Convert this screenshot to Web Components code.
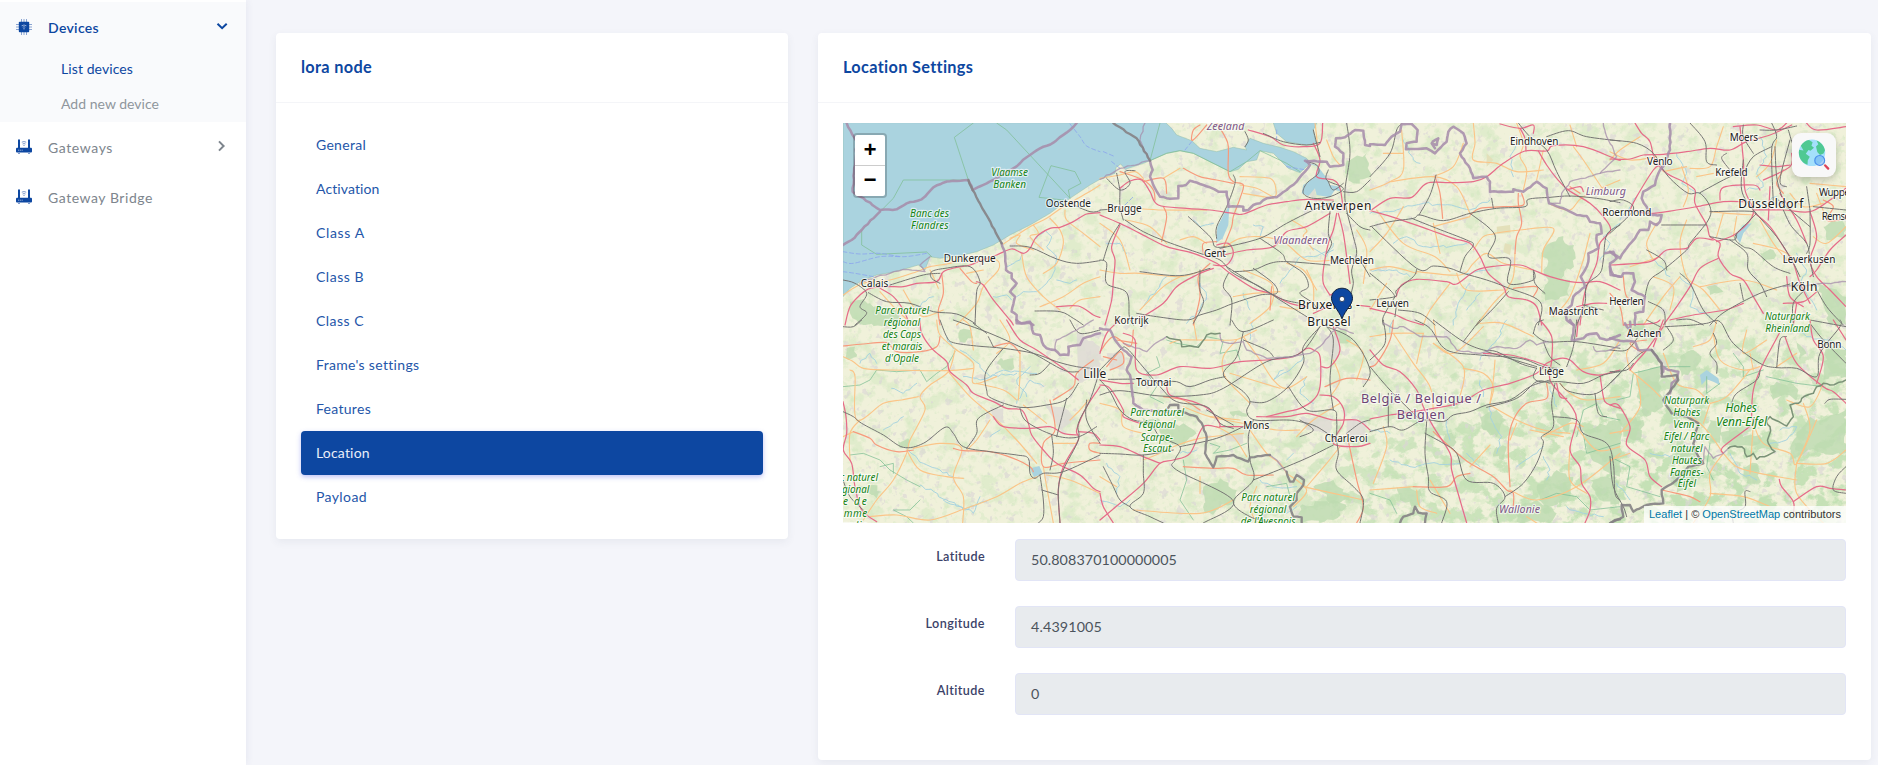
<!DOCTYPE html>
<html lang="en">
<head>
<meta charset="utf-8">
<title>Location Settings</title>
<style>
html,body{margin:0;height:100%;overflow:hidden}
body{background:#f4f5fa;font-family:Lato,"Open Sans",sans-serif;font-size:14px;color:#0d47a1}
</style>
</head>
<body>
<app-shell>
  <nav-group slot="nav" open>
    <nav-item icon="chip" w="50" arrow="down" active>Devices</nav-item>
    <nav-item sub w="71" active>List devices</nav-item>
    <nav-item sub w="97">Add new device</nav-item>
  </nav-group>
  <nav-group slot="nav">
    <nav-item icon="router" w="64" arrow="right">Gateways</nav-item>
    <nav-item icon="router" w="104">Gateway Bridge</nav-item>
  </nav-group>
  <ui-card class="left" heading="lora node" w="70">
    <tab-item w="49">General</tab-item>
    <tab-item w="63">Activation</tab-item>
    <tab-item w="48">Class A</tab-item>
    <tab-item w="47">Class B</tab-item>
    <tab-item w="47">Class C</tab-item>
    <tab-item w="102">Frame's settings</tab-item>
    <tab-item w="54">Features</tab-item>
    <tab-item w="53" selected>Location</tab-item>
    <tab-item w="50">Payload</tab-item>
  </ui-card>
  <ui-card class="right" heading="Location Settings" w="129" flush>
    <map-view></map-view>
    <form-row label="Latitude" lw="48" w="145">50.808370100000005</form-row>
    <form-row label="Longitude" lw="58.5" w="70">4.4391005</form-row>
    <form-row label="Altitude" lw="47.5" w="8">0</form-row>
  </ui-card>
</app-shell>
<script>
const make=(el,html)=>{const r=el.attachShadow({mode:'open'});r.innerHTML=html;return r;};

/* Inline text that spreads its letters to fill a given width. */
customElements.define('fit-text',class extends HTMLElement{
  connectedCallback(){
    if(!this.shadowRoot)make(this,'<style>:host{display:inline-block;white-space:nowrap}</style><slot></slot>');
    const w=parseFloat(this.getAttribute('w')),n=this.textContent.trim().length;
    if(!w||n<2)return;
    const r=document.createRange();r.selectNodeContents(this);
    const nat=r.getBoundingClientRect().width;
    if(nat)this.style.letterSpacing=((w+1-nat)/n).toFixed(3)+'px';
  }
});

customElements.define('app-shell',class extends HTMLElement{
  connectedCallback(){make(this,`<style>
  :host{display:flex;height:765px}
  nav{width:246px;flex:none;background:#fff;box-shadow:0 0 8px rgba(60,70,120,.09);padding-top:2px;box-sizing:border-box}
  main{flex:1;display:flex;align-items:flex-start;gap:30px;padding:33px 7px 0 30px}
  ::slotted(.left){width:512px;flex:none}
  ::slotted(.right){flex:1}
  </style><nav><slot name="nav"></slot></nav><main><slot></slot></main>`);}
});

customElements.define('nav-group',class extends HTMLElement{
  connectedCallback(){make(this,`<style>:host{display:block;background:#fff}:host([open]){background:#f9fafc}</style><slot></slot>`);}
});

const ICONS={
chip:`<svg width="16" height="16" viewBox="0 0 16 16"><path d="M5.5 0v16M8 0v16M10.5 0v16M0 5.5h16M0 8h16M0 10.5h16" stroke="#8aa4d2" stroke-width="1"/><rect x="2.8" y="2.8" width="10.4" height="10.4" rx="1" fill="#0d47a1"/><path d="M5.6 6.8q2.4-1.6 4.8 0M6.7 8.2q1.3-.9 2.6 0" fill="none" stroke="#9fb5dc" stroke-width=".9"/><circle cx="8" cy="9.7" r=".7" fill="#9fb5dc"/></svg>`,
router:`<svg width="16" height="16" viewBox="0 0 16 16"><path d="M3 1.3v8M13 1.3v8" stroke="#0d47a1" stroke-width="2" stroke-linecap="round"/><rect y="8.8" width="16" height="4.8" rx="1" fill="#0d47a1"/><path d="M2 11.2h5" stroke="#9fb5dc" stroke-width=".9" stroke-dasharray="1.2 .6"/><path d="M5.8 3.2q2.2-1.3 4.4 0M6.5 5q1.5-1 3 0" fill="none" stroke="#7f9bcc"/><circle cx="8" cy="6.4" r=".7" fill="#7f9bcc"/><path d="M2 14.4h2M12 14.4h2" stroke="#7f9bcc" stroke-width="1.4"/></svg>`};

customElements.define('nav-item',class extends HTMLElement{
  connectedCallback(){
    const a=this.getAttribute('arrow'),i=this.getAttribute('icon');
    make(this,`<style>
    :host{display:flex;align-items:center;height:50px;padding:0 18px 0 16px;color:#7d858d;font-size:14px;box-sizing:border-box}
    :host([sub]){height:35px;padding-left:61px;color:#8f969d}
    :host([active]){color:#0d47a1}
    :host([active]:not([sub])){font-weight:600}
    .i{width:16px;height:16px;margin-right:16px;flex:none}
    .t{flex:1}:host([sub]) .t{padding-bottom:2px}
    svg{display:block}svg.a{margin-bottom:2px}
    </style>${i?`<span class="i">${ICONS[i]}</span>`:''}<span class="t"><fit-text w="${this.getAttribute('w')}">${this.textContent}</fit-text></span>
    ${a?`<svg class="a" width="12" height="12" viewBox="0 0 12 12" fill="none" stroke="currentColor" stroke-width="2">${a=='down'?'<path d="M1.5 3.8l4.6 4.4 4.6-4.4"/>':'<path d="M3 1.4l4.6 4.6L3 10.6"/>'}</svg>`:''}`);
  }
});

customElements.define('ui-card',class extends HTMLElement{
  connectedCallback(){make(this,`<style>
  :host{display:block;background:#fff;border-radius:4px;box-shadow:0 3px 9px rgba(60,70,100,.07)}
  header{height:66px;padding:0 25px 3px;border-bottom:1px solid #f4f5f8;display:flex;align-items:center;font-size:16.3px;font-weight:700;box-sizing:content-box}
  section{padding:20px 25px 20px}
  :host([flush]) section{padding:20px 25px 45px}
  </style><header><fit-text w="${this.getAttribute('w')}">${this.getAttribute('heading')}</fit-text></header><section><slot></slot></section>`);}
});

customElements.define('tab-item',class extends HTMLElement{
  connectedCallback(){make(this,`<style>
  :host{display:flex;align-items:center;height:44px;padding:0 15px 2px;box-sizing:border-box;border-radius:4px;color:#2456a9}
  :host([selected]){background:#0d47a1;color:#e9eefa;box-shadow:0 2px 5px rgba(70,80,230,.35)}
  </style><fit-text w="${this.getAttribute('w')}">${this.textContent}</fit-text>`);}
});

customElements.define('form-row',class extends HTMLElement{
  connectedCallback(){make(this,`<style>
  :host{display:flex;margin-top:25px;height:42px}
  :host(:first-of-type){margin-top:16px}
  label{width:142px;margin-right:30px;text-align:right;font-size:12.6px;font-weight:600;color:#3b4268;line-height:35px}
  div{flex:1;background:#e8ebee;border:1px solid #e2e5f6;border-radius:4px;padding:0 15px 2px;display:flex;align-items:center;color:#4c545c;font-size:14.3px;box-sizing:border-box}
  </style><label><fit-text w="${this.getAttribute('lw')}">${this.getAttribute('label')}</fit-text></label><div><fit-text w="${this.getAttribute('w')}">${this.textContent}</fit-text></div>`);}
});

/* Map geometry, one sheet per entry, three units to a pixel. */
const SHEETS=[
{o:[0,0],
forest:["60,575 100,568 130,590 200,592 215,645 100,645 60,610"],
green:["430,39 373,82 415,210 220,210 190,265 150,305 95,362 95,405 140,433 290,426 305,440","500,39 530,60 720,265 715,240 753,220 735,185 663,167 627,262 700,270"],
river:["620,385 645,360 665,380 650,410 680,440 670,490 650,520 620,545 580,545 560,560","530,470 570,450 575,435","490,560 530,555 545,570","310,560 260,590 230,600","680,510 720,520 740,510"],
orange:["540,385 570,375 560,400 610,420","575,430 590,500 640,560 690,600","520,402 600,350 650,325 700,290 770,250 810,225","660,325 690,360 700,400 680,460 640,490","705,300 710,330 760,370 810,410","39,555 100,520 180,510 260,485 300,470 360,460 400,445","300,480 310,500 325,535","450,450 500,450 505,480 460,530 440,580 380,645","150,545 200,600 250,645","220,540 250,590 280,620 340,600","630,590 700,560 760,520 810,500","610,345 625,370 600,380 640,420","410,490 460,480","720,595 750,570 810,560"],
salmon:["335,490 340,550 325,600 330,645","390,475 425,515 440,520"],
red:["810,308 770,312 730,335 690,352 660,355 620,380 600,415 580,430 545,417 500,435 455,450 420,465 380,472 340,485 320,515 260,520 220,530 170,530 120,535 90,555 60,590 45,645","150,535 190,560 220,600 240,645","440,515 460,525 490,570 540,630 550,645","680,590 745,588 790,615 810,622"],
grey:["540,408 600,412 680,447 740,460 810,452","39,510 75,520 110,550 90,590 110,610 75,645","115,548 170,575 240,580 310,605 380,612 435,640","330,520 305,505 305,485 345,475 420,470 450,515 440,545 435,645","180,525 280,495 330,490","615,603 690,605 730,625 760,645","720,280 780,305 810,302"],
ferry:["39,425 90,432 150,430 220,440 290,430","39,455 70,460 150,440 210,440","720,42 750,80 770,108 810,125","39,485 75,490 130,500"],
border:["50,39 80,95 68,245 150,300 200,298 230,280 275,268 310,232 340,218 370,212 415,210 428,240","39,405 65,390 95,360 150,305","428,240 490,210 550,175 600,135 630,115 670,98 720,60 740,39","515,400 525,430 528,480 545,490 545,505 560,520 540,545 555,560 545,605 560,615 560,640 600,638 610,645"],
dark:["415,210 428,240 515,400"],
thin:["300,440 270,465 285,485 220,478 180,490 140,500 90,520"],
labels:[[92,175,530,"Calais","c"],[341,497,457,"Dunkerque","c"],[647,783,292,"Oostende","c"],[240,357,321,"Banc des","p"],[243,356,357,"Flandres","p"],[484,594,197,"Vlaamse","p"],[490,588,233,"Banken","p"],[136,297,612,"Parc naturel","p"],[161,270,648,"régional","p"]]},
{o:[810,0],
water:["618,158 650,165 652,185 640,205 610,225 605,250 625,258 645,235 650,255 690,262 705,240 725,245 720,230 690,225 680,205 655,170","348,400 352,350 372,312 388,285 385,345 368,385"],
forest:["740,150 800,130 810,200 760,220 735,190"],
green:["180,39 150,152 200,130 240,122 280,130 330,155 390,185 440,155 480,122 560,160 600,185"],
river:["340,340 300,350 280,330","460,345 490,350 480,380","700,420 640,440 600,440 570,480 540,520","300,520 320,560 300,600 260,640","560,380 620,400 680,440 700,400","20,400 60,400 80,430","200,500 170,540 130,590","430,550 450,600"],
orange:["0,205 60,195 105,185 130,205","105,295 190,300 320,300","190,205 240,175","420,225 470,235 520,260 528,240 510,205 420,200","240,390 280,380 320,400","375,410 420,385 480,380 550,395 620,450 700,450","0,480 60,490 120,490 240,500 310,480","240,500 190,530 120,600","430,480 500,510 520,535 510,590 450,640","400,560 460,550 540,545","560,460 610,480 650,540","575,330 620,360 610,380 640,420","680,90 700,140 720,165","645,39 650,80 655,130","80,330 150,350 200,400","0,340 60,390 90,480","430,250 520,265","740,280 810,290","620,480 640,530 640,600","540,590 600,600","770,360 800,420 790,520"],
salmon:["350,39 375,80 385,110 385,190 400,215 430,225 420,265 400,320 395,350 375,400 360,440","250,175 300,200 350,210 400,220","190,290 200,320 185,395","330,460 295,500 300,560 280,645","165,270 160,240 130,210 60,185","320,45 290,80 275,90 280,60 300,45","310,430 310,400 350,395","515,530 510,600","130,215 190,205 200,250"],
red:["0,315 60,340 120,370 200,410 280,430 350,460 390,490 460,535 510,550 570,580 620,590","60,235 90,213 125,210 150,245 175,285 260,295 330,300 400,310 430,312 500,285 560,275 620,268 700,270","60,345 35,410 45,450 40,510 35,570 15,645","445,60 510,80 550,105 610,110 660,100 668,39","640,100 660,150 650,200 700,210 720,235 730,300","370,435 440,420 520,410 560,365 620,350 690,310","350,405 385,400 400,430 380,465 340,465","710,310 700,360 685,400 670,480 670,520 690,555","715,310 730,370 740,440 750,520","120,625 190,580 230,530 290,495 340,475","690,555 720,545 700,580 640,610","770,585 810,590"],
grey:["75,330 130,365 200,395 300,430 360,450 400,490 480,530 540,570 620,620","0,450 20,460 20,520 80,548 88,620 100,645","60,340 30,390 10,450","60,240 60,290 70,330","0,300 30,298","20,205 60,240 90,220 75,185 105,182","50,190 60,240","265,320 330,380 345,410 375,410","350,385 350,350 380,290 405,220 400,195","360,415 480,385 560,340 640,300 700,275","480,385 545,430 560,455 610,490 625,530 600,550 640,580 650,600","400,485 460,480 510,460 560,455 690,465","120,485 240,497 330,475","385,490 370,530 395,570 390,645","300,480 300,540 310,580 280,640","110,610 170,620 260,630 300,615 350,600 400,580 480,555 530,550 520,520 460,475","740,39 750,130 735,240 740,300 760,380 770,430 755,480 760,520 750,560","730,245 770,245 810,210","690,305 685,370 695,400 680,430","740,310 780,350 810,360","620,155 650,165 655,190 620,220 610,250 640,265 690,260 730,235 680,210 685,180","435,65 445,90 435,110","490,70 550,95 620,105 660,97","640,60 660,140","685,215 700,240 730,220","780,450 810,500","380,470 460,520 540,565 600,580"],
ferry:["10,125 45,140","35,155 60,175","75,285 100,260","255,120 275,95","560,170 620,180","530,60 530,100"],
border:["150,152 158,180 150,200 165,235 180,260 210,266 235,265 235,228 258,225 270,212 300,222 330,232 355,245 380,245 385,290 430,290 430,302 445,300 460,285 480,280 500,265 530,262 560,240 590,215 605,195 615,185 630,165 615,152 680,155 690,170 730,165 730,130 705,110 708,85 735,82 750,72 765,60 790,62 795,105 810,108"],
dark:["40,39 110,85 150,152"],
thin:["135,39 120,90 150,152 60,175 0,208"],
labels:[[320,433,60,"Zeeland","r"],[22,125,306,"Brugge","c"],[614,814,300,"Antwerpen","b"],[312,378,441,"Gent","c"],[520,684,403,"Vlaanderen","r"],[690,822,462,"Mechelen","c"],[594,780,597,"Bruxelles -","b"],[622,752,648,"Brussel","b"],[43,146,641,"Kortrijk","c"]]},
{o:[1620,0],
forest:["530,405 550,395 580,378 585,400 612,405 612,470 590,475 575,505 600,510 598,560 555,570 525,572 520,540 535,510 520,480 535,455 515,440"],
tan:["380,350 420,345 422,368 382,372","405,400 425,405 420,435 400,425","350,130 370,150 350,170"],
river:["0,310 80,300 160,280 260,290 300,300 360,270","0,480 80,480 120,500","70,400 110,380 160,410 240,410 290,400","300,520 270,570 250,645","330,550 290,600","690,450 720,400 700,380 750,340","100,90 130,150 150,160","430,200 420,140 440,100","360,480 290,490"],
orange:["310,39 315,100 310,150 380,160 440,185 520,180","440,39 460,100 450,140 470,180 460,240","95,60 100,180 60,215 0,240","60,215 190,200 260,230 300,310","190,350 300,320","210,430 190,340","240,485 195,440 100,400 20,300","140,485 270,495 310,460 350,430 400,460 490,480","370,370 450,360 550,355 520,420 515,490","435,430 430,500 410,540","610,110 640,150 700,240","410,540 370,580 320,645","260,490 290,540 400,540","240,520 180,600 160,645","0,480 60,470 140,490","640,450 660,370","545,285 600,300 640,260 750,210","550,620 600,560 640,450","40,130 100,130","600,45 620,110","0,425 50,370 100,290","310,420 340,380 375,372","0,600 50,520","500,210 520,120","280,100 250,170 190,200"],
salmon:["195,200 210,250 218,325","300,315 330,295 400,290 460,285 455,250","445,250 445,280 455,340 440,380 435,430","430,535 500,530 490,560","600,230 630,250"],
red:["0,303 60,265 125,262 170,220 240,218 310,215 350,200 400,160 465,123 530,123 550,107 640,110 740,148 750,148","5,303 80,325 180,360 250,385 300,400 330,440 355,490 400,530 415,560 470,570 500,590 515,645","78,560 95,525 140,508 230,515 260,522 320,480 380,468 450,465 490,480 540,500 600,515 640,518 690,515 750,540","390,42 450,55 490,45 490,70","450,55 465,85 468,123","505,123 530,165 560,205 595,240 660,280 700,320 722,360 690,400 680,460 650,530 640,570 630,645","590,240 630,230 640,245","0,595 70,612 110,630 160,645","620,590 670,580 710,580"],
grey:["0,200 60,130 80,60 95,42","0,350 60,335 130,325 150,315 220,332 300,310 380,295 465,290 475,268 540,262 600,258 680,265 750,278","125,325 200,355 290,390 310,405 285,440 270,485","147,315 180,255 198,195","5,350 140,475 190,468 240,475 280,490 350,510 410,532 510,575 505,645","140,478 130,500 80,540 75,560 0,570","300,310 375,375 355,440 420,448 415,520 490,510 490,480 495,520 525,550","415,545 375,590 320,645","75,560 40,620 40,645","85,600 150,610 195,645","445,39 480,80 530,120 560,185 600,260","530,80 595,62 650,80 750,93","750,345 710,375 700,450 690,490 650,525 645,580 620,645","0,490 60,540 75,560","365,265 370,295","80,580 75,620","640,585 700,600"],
border:["0,103 45,105 65,80 90,65 95,42 125,42 143,60 140,95 110,100 108,118 170,115 195,130 230,95 235,65 250,50 280,70 290,100 270,130 300,175 310,205 350,200 360,215 360,245 430,245 430,238 460,245 500,215 530,235 537,280 580,295 620,315 650,318 660,335 690,340 695,370 680,375 680,395 685,415 655,430 655,455 645,480 632,500 645,530 610,560 605,585 585,600 590,630 610,645","705,430 730,425 740,445 720,460 722,495 750,500","188,95 205,85 200,105 185,100 195,115"],
thin:["750,180 690,190 600,215 575,250 570,280 545,280","700,39 710,80 740,140 690,190"],
labels:[[420,565,104,"Eindhoven","c"],[19,117,591,"Leuven","c"],[536,684,615,"Maastricht","c"],[647,768,255,"Limburg","r"],[697,844,319,"Roermond","c"]]},
{o:[2340,0],
water:["375,375 400,345 425,340 400,370 390,400"],
forest:["288,530 315,525 340,545 300,555","450,430 490,420 500,450 460,455","640,350 700,320 708,380 650,390","620,520 708,560 708,645 660,645"],
river:["80,260 60,290 30,330","200,130 230,190 215,220 270,250","210,500 250,540 240,590 300,620","410,240 460,230 440,190 470,140 450,80","500,260 450,290","560,430 590,480 570,520 620,600","120,440 180,500"],
orange:["0,125 60,150 140,140","215,170 235,240 220,290","310,190 260,200","230,330 210,400 230,500 280,540 330,600","300,305 350,310 430,315","380,320 370,380","150,440 60,470","430,400 510,420 560,450","270,530 400,510 500,540","0,150 30,120 90,80","340,50 320,110 300,170 240,175","610,380 650,400 708,350","100,645 160,560 210,500","500,90 480,160 440,200","450,330 490,400 530,450","620,250 650,330","340,310 320,380","140,340 110,400 130,450","160,185 230,170","540,250 580,290 640,280","600,220 708,230","130,500 190,530 180,600"],
salmon:["640,270 670,290 650,330 690,330","0,550 30,590 40,645","40,500 50,560 90,580","520,180 500,220 520,250"],
red:["0,147 60,147 100,135 160,133 230,125 300,115 360,120 410,95 480,75 545,45","75,39 95,70 120,95 135,150 170,190 220,215 255,240 255,280 290,345 300,380 330,400 325,440 360,490 400,510 430,560 460,610","60,300 80,260 130,180 150,165","60,300 120,310 200,300 260,290 340,275 400,275","330,270 340,232 430,225 450,240","0,465 120,455 170,420 230,415 260,385 310,390","325,445 270,475 240,530 200,590 160,645","390,50 400,150 405,240 430,310 380,370 320,395","435,310 480,350 520,410 550,460 570,520 600,580","460,210 540,170 545,130","450,165 500,170 540,165","430,300 520,300 600,305 660,270 708,235","600,305 620,380 600,450 620,500 660,540 708,590","708,375 660,420 620,480 600,500","370,50 440,45 500,60 530,39","180,630 250,615 345,600 400,580","520,580 580,575 620,545","590,40 620,60 708,50","480,230 475,330","510,250 560,330 590,400","530,500 540,560 580,590","560,580 550,645"],
grey:["0,90 80,100 130,130 160,180 190,215 235,250 270,250 300,290 295,330 240,400 230,420 160,480 120,510 105,560","270,248 350,205 400,185","240,39 285,95 290,155 320,165","400,150 395,240 430,300 500,380 545,450 570,500","300,305 430,305 420,330 375,380 400,410 430,420 490,470 540,490","300,380 370,390 380,370","485,39 500,80 485,120 490,280","485,110 430,140 405,180","495,110 500,200 515,260","450,60 500,60 560,48","520,300 545,350 590,400 600,450 610,500","600,300 600,400 590,430","540,522 450,550 345,605 300,645","360,390 410,430 415,480 450,520 470,560","155,345 290,345","0,275 40,270 70,300 0,370","115,575 160,600 165,645","210,490 240,520 280,600 320,640","610,520 650,590 700,645","585,540 550,580 550,645","110,420 160,450 170,480","540,90 510,210 530,230","610,290 708,300","200,630 240,628 280,645","400,45 400,80 430,130","350,130 335,145 360,180","535,60 560,120 620,130","590,230 600,300","390,520 400,570","505,270 600,350"],
border:["180,39 180,120 165,160 145,190 135,225 100,245 95,265 110,290 120,315 155,315 150,335 140,345 120,335 115,360 90,360 75,385 50,415 30,445 0,425","0,470 10,495 35,500 40,490 70,490 75,515 65,540 105,560 100,605 75,610 75,645"],
thin:["520,530 600,525 650,520 708,515"],
labels:[[359,444,94,"Moers","c"],[111,188,165,"Venlo","c"],[316,413,197,"Krefeld","c"],[385,580,293,"Düsseldorf","b"],[627,760,257,"Wuppertal","c"],[635,770,331,"Remscheid","c"],[518,676,458,"Leverkusen","c"],[542,622,543,"Köln","b"],[-2,101,584,"Heerlen","c"],[464,600,631,"Naturpark","p"]]},
{o:[0,630],
water:["600,445 628,438 638,460 612,472"],
forest:["50,85 75,80 80,110 55,120","85,495 130,495 155,515 140,535 100,520","205,362 240,362 235,382 205,378","515,115 550,115 545,150 515,145 500,130","385,40 420,30 430,55 390,65"],
urban:["480,260 520,265 525,310 490,300","740,30 810,80 810,170 745,190","650,260 700,260 740,300 690,330"],
green:["60,405 100,400 150,420 180,450 230,480 270,500","39,200 90,195 120,180 140,150 200,155 270,150 290,185 320,160 350,140 375,95","270,540 240,570 190,570 230,590 250,609","150,440 190,430 190,460"],
river:["230,385 280,430 330,450 370,470","270,495 350,540 400,570 470,545","390,90 420,110 480,170 560,160","185,205 220,220 260,190","560,250 600,180 640,200","160,330 190,310 220,290","400,170 450,180 520,150 620,160","340,540 430,580 450,530","480,350 510,330","600,140 560,180 590,230","90,130 120,100 140,130","350,50 380,90"],
orange:["39,110 70,125 100,145 180,150 350,152 430,145","375,90 355,155 300,195 270,230 285,270 240,360 230,400 190,480 140,540 100,600","355,155 420,230 490,290 560,360 620,430","60,150 75,170 80,300 160,250 215,240 265,230","250,385 330,370 395,385 370,470 400,530 398,609","400,568 300,600 200,585 120,590","400,568 500,530 570,490 620,470","230,390 270,450 350,470 400,475","380,90 430,130 430,190 500,170","640,440 650,500 670,609","650,465 720,480 810,520","60,420 60,340 90,300","430,90 420,20 400,0","480,300 440,360 410,390","580,255 650,310","570,170 565,240","720,300 750,270 775,240","570,90 570,170","320,0 330,45 380,90","39,350 70,335","510,0 540,60 500,100","440,190 520,210 560,240","670,370 740,370"],
salmon:["39,78 100,72 170,68 200,95 270,95 320,80 330,50","70,335 120,355 140,375 200,395 250,390","370,385 400,392 480,395 550,415 600,440 610,455","660,240 675,330 640,370 640,440 700,430 810,420","490,80 540,70 570,100","790,120 740,160 730,200 670,240","810,370 780,370 780,390 810,400"],
red:["270,0 275,40 305,85 350,125 360,155 410,195 430,220 490,245 530,265 575,270 595,310 605,345 640,390 680,430 750,465 790,505 810,515","530,0 570,60 620,90 700,145 745,180","39,245 48,290 50,340 40,390 65,430 75,500 95,570 140,605","490,290 520,320 600,325 660,320 700,340 745,345","810,200 770,260 740,330 745,360 700,440 685,510 690,609","745,335 790,340 810,360"],
grey:["39,275 70,290 95,310 160,345 220,382 280,370 345,322 370,340 400,380 480,395 560,405 595,415 600,460 615,475 640,460 700,455 810,405","330,0 350,50 370,68 440,78 520,85 610,100 680,125 740,140 790,145","370,0 480,40 600,95 700,150 745,155","520,85 468,155 470,210 485,235 570,262 650,255 710,238 745,190","520,255 445,295 440,340 410,385","570,265 590,305 670,345 740,352 800,320","710,235 680,350","810,150 780,240 745,310 745,360 700,450 685,510 690,609","630,465 640,540 640,590 625,609","635,510 685,525","665,345 670,400 660,450","475,50 490,80","770,240 770,300 810,370","600,165 630,160 660,130","430,10 470,40","39,20 70,20 95,0","39,480 60,530 100,570","720,0 750,40 810,30"],
border:["560,0 575,10 600,5 610,40 630,45 640,75 650,85 675,90 690,105 715,105 715,80 750,75 760,55 810,40"],
thin:["675,90 680,60 720,40 760,20 790,0"],
labels:[[159,273,54,"des Caps","p"],[155,277,90,"et marais","p"],[165,267,126,"d'Opale","p"],[-15,144,484,"Parc naturel","p"],[10,118,520,"régional","p"],[-20,110,556,"Baie de","p"],[-40,112,591,"de Somme","p"],[-10,112,627,"Picardie","p"],[760,829,174,"Lille","b"]]},
{o:[810,630],
forest:["310,500 335,490 360,475 410,510 405,545 350,570 340,585 315,580","600,560 700,540 740,560 700,600 600,605","180,320 250,310 290,340 240,375 180,360","390,275 450,275 440,290 400,290","640,500 700,480 760,540 700,550","700,40 740,30 755,60 720,70","120,290 180,300 170,330 130,320"],
urban:["20,100 70,95 75,150 30,150","370,335 430,345 430,370 380,365","600,290 700,300 690,345 620,330","660,40 720,50 710,120 670,90","740,300 800,300 790,350 740,345"],
green:["170,110 180,140 140,160 170,200 150,230 190,250","250,420 260,480 240,540 280,600","200,60 230,70 290,80 320,50 370,60 360,100 410,90 420,120","500,500 560,490 570,530","330,370 360,380 340,400 390,390 440,370"],
river:["620,170 600,220 640,250","460,0 450,60","560,420 580,400","0,540 60,560 90,540","240,400 290,390","550,150 520,180 570,150 610,110","480,480 520,500 590,500","20,430 60,470 50,520","590,560 560,580"],
orange:["210,70 240,60 290,60 400,60 430,50 470,30","280,0 290,60","430,50 480,120 520,180 560,205 620,170","250,260 330,290 430,310 530,330 600,330","300,470 300,520","130,420 180,400 220,380 300,355 430,340","450,330 500,400 540,430 560,460","470,500 450,560 470,609","400,540 300,580 100,570","0,250 60,270 70,320 130,340","620,500 680,430 720,380","410,60 370,110 375,170 430,230 450,250","590,350 640,300 720,250","610,500 700,520 790,540","560,460 620,510 580,560","0,470 50,500","390,160 540,205","330,290 420,300","740,60 790,100 770,180","350,320 400,350 440,410","700,120 720,180 690,230"],
salmon:["0,95 40,50 90,80 100,30","20,140 60,95 70,130 30,150","250,440 340,445 400,445 440,465 520,465","675,200 740,175 810,180","740,340 770,480 790,560 770,609","190,230 250,240 300,270","10,110 50,120","50,60 110,70"],
red:["70,40 105,60 110,150 170,165 240,140 330,145 420,125 500,120 580,110 620,85 640,90 660,110 660,200 640,240 600,265 560,275 500,290","0,180 60,190 100,190","0,195 30,205 70,270 70,290 120,310","200,190 210,225 280,245 330,270 360,320 310,320 270,400 220,420 180,430 130,490 60,550 0,600","360,320 430,320","0,375 60,380 130,410 180,430","470,290 560,290 620,280 700,300 770,300 810,330","660,225 700,230 730,265 730,310 700,370 770,380 810,370","0,520 10,560 40,609","700,20 720,90 690,140 665,140","0,100 20,40 60,0"],
grey:["0,180 30,215 60,270 100,300 150,310 180,350 240,380 225,420 230,450 400,543 310,609","0,225 60,212 180,228 300,225 370,205 500,125 600,100 660,20","25,178 120,178 180,185 230,185 270,200 330,180 375,170","0,150 60,90 80,85 120,130 180,200 230,245 320,260 360,310 400,325","430,35 410,110 370,165 430,215 450,245 440,275 465,300 560,300 600,305 650,320 710,360","395,0 430,35 520,0","430,60 500,90 520,110","450,245 500,245 565,200 610,130 610,80 660,20","565,200 620,270 700,270 710,300 710,360 715,400 710,450 760,500 790,540 780,609","430,320 350,355 240,380","460,300 445,350 450,420 460,480 400,545 450,590 520,609","460,480 560,440 630,410 700,375","0,400 60,402 130,405 220,390","130,405 130,460 130,520 90,560 150,590 190,609","680,20 700,60 690,180 700,270","680,20 760,60 810,150 790,200","600,300 640,330 600,350","10,440 40,500 60,540 90,560","740,340 780,310 810,300","320,270 400,315"],
border:["0,25 30,30 45,60 70,90 95,110 80,150 90,165 100,250 130,270 200,275"],
dark:["200,275 210,255 235,255 235,270 270,285 290,290 310,320 320,350 315,400 340,442 350,410 400,405 410,412 445,425 450,412 510,405","560,455 570,485 580,485 590,465 612,480 610,495 590,520 590,540 570,560 580,590 605,592 605,609"],
thin:["70,70 140,95 160,75 200,50","360,40 365,65 400,70 430,65 440,90 500,115 580,110 630,100 670,70 710,20 760,40","510,405 530,420 545,440 560,455"],
park:["200,50 240,60 245,80 295,82 320,45 360,40"],
labels:[[108,214,197,"Tournai","c"],[430,508,327,"Mons","c"],[674,803,366,"Charleroi","c"],[91,252,289,"Parc naturel","p"],[116,226,325,"régional","p"],[122,219,362,"Scarpe-","p"],[129,214,397,"Escaut","p"],[424,585,543,"Parc naturel","p"],[449,559,579,"régional","p"],[422,587,614,"de l'Avesnois","p"]]},
{o:[1620,630],
forest:["330,290 380,270 410,300 380,350 340,330","500,500 560,450 610,470 600,530 540,560 510,540","640,330 750,300 750,470 700,450 650,400","80,500 150,510 150,560 90,540","440,560 500,540 560,580 540,609 440,605","220,330 260,350 250,380 225,370","660,480 740,470 750,560 690,540","580,260 605,300 590,340 560,300","380,380 410,380 400,420 370,410"],
green:["0,520 60,540 80,580","510,540 560,520 620,530 660,570 750,560","640,340 650,400 750,370","620,350 640,270 680,250 700,290 750,300"],
river:["360,255 365,300 395,350 380,400","60,420 120,440 200,430 270,430","440,440 500,400 520,380","520,410 540,450 530,480","230,300 240,360","590,560 640,580 700,590","330,120 380,60 410,0","70,0 60,40","330,440 290,400","540,200 560,260","0,330 60,340","330,180 340,230"],
orange:["70,40 130,130 180,200 190,270","160,40 140,130","190,70 280,140 270,230","280,145 340,160 370,200 360,250","375,120 370,180 360,250","330,10 400,10 490,50","0,510 130,500","40,320 50,380 10,490","360,255 440,300 520,330 600,340","300,440 360,375","520,350 600,310 640,320","600,380 600,480 650,520","420,510 500,540 620,500 750,400","340,20 250,100 190,70","180,480 240,580","570,190 600,220 650,240 750,230","620,150 700,130 750,60","0,50 70,40 160,40","440,310 420,360","480,330 580,350","190,0 200,60","470,590 500,609","140,510 150,560 200,580","620,320 680,390 750,380"],
salmon:["530,190 530,235 470,250 430,300 415,370 420,500","190,335 250,390 300,430 370,470 410,510 430,520 430,560","130,500 230,500 260,470 300,460","70,0 60,60 20,130 0,140"],
red:["0,90 40,135 90,155 140,210 160,260 190,320 240,400 245,450 270,540 290,609","0,297 60,285 130,275 220,260 280,245 340,210 420,190 500,160 530,130 570,115 600,120 640,155 690,165 750,150","340,100 420,105 480,120 540,140","510,0 545,50 545,120 540,180 580,230 605,260 620,300 600,390 630,440 635,490 660,530 660,570 645,609","690,165 700,230 710,250 750,265","625,0 620,50","560,190 570,230 590,235"],
grey:["135,0 180,25 230,90 330,105 450,115 520,140 560,145","190,0 280,65 340,90 380,95 450,130 500,145","0,120 45,70 40,0","0,140 60,210 150,300","330,0 280,65","490,40 530,65 620,65 750,85","520,65 540,110 570,135","620,0 610,80 590,140","500,145 490,170 510,185 570,185 640,190 700,165 750,155","0,335 60,320 100,330 160,300 220,305 250,285 300,275 350,255 420,240 480,200 540,180","170,305 165,400 175,470 180,515 230,545 215,609","165,340 220,370 260,400 290,480 370,490 405,530 380,565 385,609","405,530 460,490 500,430 520,370 515,350 550,320 545,250 555,190","550,290 620,300 640,340 710,370 730,430 735,520 750,540","490,40 500,10 520,0","570,190 600,215 680,220 750,160","675,220 685,280 710,290","55,320 55,220","350,95 450,125 500,140","350,262 440,235 500,185 540,190"],
border:["600,0 612,15 610,40 605,60 640,55 650,45 680,40 690,55 710,60 750,45"],
dark:["90,609 100,590 130,580 135,560 145,578 170,580 165,609","722,609 735,600 750,598"],
thin:["40,10 70,25 100,20 150,50 230,50 260,90 330,100 380,80 440,85 480,60 500,75 530,65","670,80 680,95 720,90 750,75"],
labels:[[507,582,165,"Liège","c"],[-27,333,248,"België / Belgique /","n"],[80,225,297,"Belgien","n"],[387,510,579,"Wallonie","r"]]},
{o:[2340,630],
water:["270,165 290,150 325,175 330,195 310,185 290,178 275,195"],
forest:["560,350 600,290 640,300 708,270 708,400 640,400 600,390 540,420 545,370","480,210 500,185 540,190 565,210 560,240 530,225 490,240","210,110 250,90 275,110 260,150 215,170 205,140","85,150 150,140 150,210 160,260 110,290 80,230","330,340 380,330 400,350 450,345 450,370 400,375 350,375","300,300 340,310 330,370 285,360","180,460 250,440 260,490 200,520","400,440 440,430 450,490 410,490","650,80 708,90 708,170 640,180","20,280 100,300 90,360 40,350","560,60 590,100 570,120","200,370 260,380 250,430 200,420","100,0 60,30 100,40"],
green:["20,240 60,230 70,160 150,140 240,140","470,170 560,190 640,200","290,170 290,220 330,190","300,370 290,440 310,480","0,410 60,440 50,500 150,530","370,100 400,140 400,170 460,150"],
river:["510,330 560,320 530,360 480,370","440,480 390,460 360,400","120,400 180,410","560,20 590,50 660,60 708,90","240,250 260,300","20,490 60,540"],
orange:["60,150 120,200 150,230","75,65 50,100 60,150","160,100 200,190 260,210 300,250","340,400 300,460 300,530 250,609","340,400 380,440 450,460 560,480","430,310 460,370 540,400 560,430 620,300","560,430 560,520 640,609","310,40 330,120 400,150 450,140","300,250 350,230 420,150","500,140 560,100","420,100 430,150","80,170 90,260 30,340","0,420 60,400","280,310 300,250","560,430 650,430 708,390","470,60 400,100 410,30","580,250 600,330 560,430","190,250 280,320 340,400","0,340 60,330","640,190 600,260 530,240","430,310 420,460","250,80 300,60 320,0","300,520 400,530 480,560"],
salmon:["155,510 200,520 240,530 270,545","110,60 60,70 100,100"],
red:["0,255 25,255 60,320 50,375 105,420 120,470 155,500","508,478 515,500 550,545 550,580","550,545 620,500 660,505 708,510","525,50 560,130 640,200 670,215 708,250","508,40 455,140 430,210 425,290 430,310 340,380 340,400","40,15 130,10 150,0","160,20 110,90 75,130 60,150","600,0 610,60 640,110 620,190","160,0 130,80","670,0 708,60"],
grey:["165,20 250,15 290,10 330,5 370,70 450,130 500,143 560,145 620,170 630,100 690,20 690,0","500,143 510,60 530,50","450,150 440,180 380,220 365,250","310,40 320,70 300,100 320,130 320,160","0,90 50,90 85,50","0,190 80,110 110,90","600,10 640,60 708,130","0,410 10,500 40,560 50,590","420,515 405,515 405,560 370,580 370,609","708,440 680,470 670,510 708,520","645,250 660,238 708,238","0,155 50,150 70,130","170,20 190,60 160,90","600,0 708,20","150,20 110,0"],
border:["0,55 30,62 75,65 85,90 125,90 155,130 155,160","160,155 160,140 175,150 205,155 200,180 185,190 180,220","45,10 60,30 60,5"],
dark:["125,90 155,130 155,170 200,165 205,180 180,215 160,240 185,280 230,290 265,310 250,370 260,400 280,430 235,440 200,480 155,510 160,550 110,555 70,575 60,555 35,555 40,590 0,609"],
park:["355,385 375,378 395,380 410,410 430,400 440,418 450,410 495,395 475,370 480,320 470,305 480,290 530,318 550,290 540,255 565,250 575,235 610,220 620,200 640,190 660,195 708,180"],
thin:["260,400 280,425 285,380 310,415 340,400 360,380"],
labels:[[51,154,50,"Aachen","c"],[622,694,85,"Bonn","c"],[466,599,37,"Rheinland","p"],[162,298,251,"Naturpark","p"],[190,271,287,"Hohes","p"],[190,270,323,"Venn -","p"],[161,298,359,"Eifel / Parc","p"],[183,278,395,"naturel","p"],[186,276,431,"Hautes","p"],[180,281,467,"Fagnes-","p"],[203,258,502,"Eifel","p"],[346,441,275,"Hohes","q"],[318,471,317,"Venn-Eifel","q"]]}
];
const pts=s=>s.trim().split(/\s+/).map(p=>p.split(',').map(Number));
/* Catmull-Rom curve through the points */
const curve=s=>{const p=pts(s);let d=`M${p[0]}`;
  for(let i=0;i<p.length-1;i++){const a=p[i-1]||p[i],b=p[i],c=p[i+1],e=p[i+2]||c;
    d+=`C${(b[0]+(c[0]-a[0])/6).toFixed(1)} ${(b[1]+(c[1]-a[1])/6).toFixed(1)} ${(c[0]-(e[0]-b[0])/6).toFixed(1)} ${(c[1]-(e[1]-b[1])/6).toFixed(1)} ${c[0]} ${c[1]}`;}
  return d;};
const poly=s=>'M'+pts(s).join('L');
/* Adds small bends along a line so boundaries and streams look natural */
const rough=(s,amp)=>{const p=pts(s);let k=p[0][0]*7+p[0][1]*13+1;const rnd=()=>{k=Math.abs(k*16807)%2147483647;return k/2147483647-.5;};
  let d='M'+p[0];for(let i=1;i<p.length;i++){const a=p[i-1],b=p[i],L=Math.hypot(b[0]-a[0],b[1]-a[1]),n=Math.max(1,Math.round(L/12));
    for(let j=1;j<n;j++)d+=`L${(a[0]+(b[0]-a[0])*j/n+rnd()*amp).toFixed(1)} ${(a[1]+(b[1]-a[1])*j/n+rnd()*amp).toFixed(1)}`;d+='L'+b;}return d;};
const sheet=(key,fn)=>SHEETS.map(t=>t[key]?`<g transform="translate(${t.o})">${t[key].map(fn).join('')}</g>`:'').join('');
const layer=(cls,key,fn)=>`<g class="${cls}">${sheet(key,s=>`<path d="${fn(s)}"/>`)}</g>`;
const SEA="M39 39V560L60 535 95 512 140 495 180 488 220 478 265 465 285 480 300 440 330 445 400 435 440 425 490 405 540 375 600 345 660 310 720 265 780 225 810 208 855 190 858 172 872 162 886 178 940 160 960 152 1010 130 1050 122 1090 130 1140 155 1200 185 1225 178 1250 155 1280 150 1290 122 1330 130 1355 155 1375 175 1410 188 1440 160 1430 145 1390 125 1350 112 1300 100 1260 85 1245 110 1250 120 1210 112 1160 125 1110 115 1085 92 1040 75 1025 55 1008 39ZM1330 39 1340 70 1370 95 1430 105 1458 100 1450 60 1460 39Z";
const tex=(id,freq,seed,rgb,k,c,oct=4)=>`<filter id="${id}" x="0" y="0" width="1" height="1" color-interpolation-filters="sRGB"><feTurbulence type="fractalNoise" baseFrequency="${freq}" numOctaves="${oct}" seed="${seed}"/><feColorMatrix values="0 0 0 0 ${rgb[0]} 0 0 0 0 ${rgb[1]} 0 0 0 0 ${rgb[2]} ${k} 0 0 0 ${c}"/></filter>`;

customElements.define('map-view',class extends HTMLElement{
  connectedCallback(){
    const labels=SHEETS.map(t=>`<g transform="translate(${t.o})">${t.labels.map(([a,b,y,s,c])=>`<text class="${c}" x="${a}" y="${y}" textLength="${b-a}">${s}</text>`).join('')}</g>`).join('');
    make(this,`<style>
    :host{display:block;position:relative;width:1003px;height:400px;overflow:hidden;background:#f0f1da}
    svg.map{display:block}
    .map path{fill:none;stroke-linejoin:round;stroke-linecap:round}
    .map .forest path{fill:#bddbb0;fill-opacity:.8}.map .tan path{fill:#e3e0ba}.map .urban path{fill:#ddd9d4;fill-opacity:.8}
    .map .water path,.map path.sea{fill:#aad3df}
    .map .coast{stroke:#8fbca8;stroke-width:1.5}
    .green path{stroke:#7fbf95;stroke-width:3;opacity:.75}
    .river path{stroke:#a5d2df;stroke-width:2.8}
    .orange path{stroke:#fbc588;stroke-width:3.4}
    .salmon path{stroke:#f79a7c;stroke-width:3.6}
    .red path{stroke:#e66c89;stroke-width:3.7}
    .grey path{stroke:#757573;stroke-width:3}
    .ferry path{stroke:#8aa3ee;stroke-width:2.4;stroke-dasharray:12 8}
    .border path{stroke:#a68dab;stroke-width:7.6;opacity:.88}
    .dark path{stroke:#858285;stroke-width:7;opacity:.9}
    .thin path{stroke:#a68dab;stroke-width:4;opacity:.75}
    .park path{stroke:#7b9278;stroke-width:4.5}
    text{font-family:"Noto Sans",sans-serif;paint-order:stroke;stroke:#fff;stroke-opacity:.65;stroke-width:7;stroke-linejoin:round}
    .c{font-size:30px;fill:#222}.b{font-size:36px;fill:#1c1c1c}
    .p{font-size:30px;font-style:italic;fill:#158315}.q{font-size:36px;font-style:italic;fill:#158315}
    .r{font-size:32px;font-style:italic;fill:#7d5687}.n{font-size:38px;fill:#6d4575}
    .zoom{position:absolute;left:10px;top:10px;width:30px;border:2px solid rgba(0,0,0,.2);background-clip:padding-box;border-radius:4px;background-color:#fff;color:#000;font:bold 22px/33px "Liberation Mono",monospace;text-align:center}
    .zoom span{display:block;height:30px}.zoom span+span{border-top:1px solid #ccc;line-height:31px}
    .globe{position:absolute;right:10px;top:10px;width:44px;height:44px;border-radius:9px;background:#f8f8f8;box-shadow:0 3px 7px rgba(0,0,0,.2)}
    .pin{position:absolute;left:487px;top:164px}
    .att{position:absolute;right:0;bottom:0;height:17px;line-height:17px;padding:0 5px;background:rgba(255,255,255,.75);color:#333;font-family:"Liberation Sans",Arial,sans-serif;font-size:11px;white-space:nowrap}
    .att b{font-weight:400;color:#0078a8}
    </style>
    <svg class="map" width="1003" height="400" viewBox="0 0 1003 400">
    <defs>
    ${tex('g1','.05 .06',4,[.8,.9,.73],7,-3.8,5)}${tex('g2','.06 .07',11,[.74,.87,.69],9,-4.6,5)}${tex('g3','.16',8,[.86,.92,.79],7,-3.9,3)}${tex('u1','.12',22,[.86,.84,.84],12,-7.7,3)}
    <radialGradient id="fade" cx=".88" cy=".95" r=".62"><stop offset="0" stop-color="#fff"/><stop offset=".55" stop-color="#bbb"/><stop offset="1" stop-color="#000"/></radialGradient>
    <mask id="m"><rect width="1003" height="400" fill="url(#fade)"/></mask>
    </defs>
    <rect width="1003" height="400" fill="#f0f1da"/>
    <rect width="1003" height="400" filter="url(#g3)" opacity=".6"/>
    <rect width="1003" height="400" filter="url(#g1)" opacity=".42"/>
    <g mask="url(#m)"><rect width="1003" height="400" filter="url(#g2)" opacity=".9"/></g>
    <rect width="1003" height="400" filter="url(#u1)" opacity=".6"/>
    <g transform="translate(-13 -13) scale(.33333)">
    ${layer('forest','forest',s=>rough(s+' '+s.trim().split(' ')[0],14)+'Z')}${layer('tan','tan',s=>poly(s)+'Z')}${layer('urban','urban',s=>rough(s,10)+'Z')}
    <path class="sea coast" d="${SEA}"/>
    ${layer('water','water',s=>poly(s)+'Z')}
    ${layer('river','river',s=>rough(s,9))}
    ${layer('green','green',poly)}
    ${layer('ferry','ferry',curve)}
    ${layer('orange','orange',curve)}
    ${layer('salmon','salmon',curve)}
    ${layer('red','red',curve)}
    ${layer('grey','grey',curve)}
    ${layer('thin','thin',s=>rough(s,4))}
    ${layer('park','park',s=>rough(s,8))}
    ${layer('border','border',s=>rough(s,3))}
    ${layer('dark','dark',s=>rough(s,3))}
    ${labels}
    </g></svg>
    <svg class="pin" width="24" height="34" viewBox="0 0 24 34"><path d="M12 1.2C5.9 1.2 1.5 5.7 1.5 11.3 1.5 17.8 8.3 22.3 12 31.8 15.7 22.3 22.5 17.8 22.5 11.3 22.5 5.7 18.1 1.2 12 1.2Z" fill="#0d47a1" stroke="#10203c" stroke-width="1"/><circle cx="12" cy="12" r="2.6" fill="#fff" stroke="#10203c" stroke-width=".7"/></svg>
    <div class="zoom"><span>+</span><span>−</span></div>
    <div class="globe"><svg width="44" height="44" viewBox="0 0 44 44"><circle cx="20" cy="19.8" r="13.2" fill="#a4e0fb"/><path d="M8.8 12.8C11 9.3 14 7.5 17 7L20.6 9.3 19.5 12.8 22 14.8 18.5 17.8 16.5 17.1 13.8 20.8 17.8 23.8 15.8 27.3 15.5 31.8C9 29.8 5.8 23.3 7.1 16.8L11.5 17.5 8.8 12.8ZM24.5 7.4C29 9.1 32 12.6 33 17.3L31.5 20.5 28 22 25.3 19 24 13.5 26.3 11.2Z" fill="#4fc993"/><circle cx="27.7" cy="27.4" r="4.9" fill="#6aaef0" fill-opacity=".55" stroke="#4a90ec" stroke-width="1.2"/><path d="M31.3 31l1.6 1.5" stroke="#d5d5d5" stroke-width="1.5"/><path d="M33.2 32.5l3 3.1" stroke="#dc4359" stroke-width="2.3" stroke-linecap="round"/></svg></div>
    <div class="att"><fit-text w="191"><b>Leaflet</b> | © <b>OpenStreetMap</b> contributors</fit-text></div>`);
  }
});
</script>
</body>
</html>
